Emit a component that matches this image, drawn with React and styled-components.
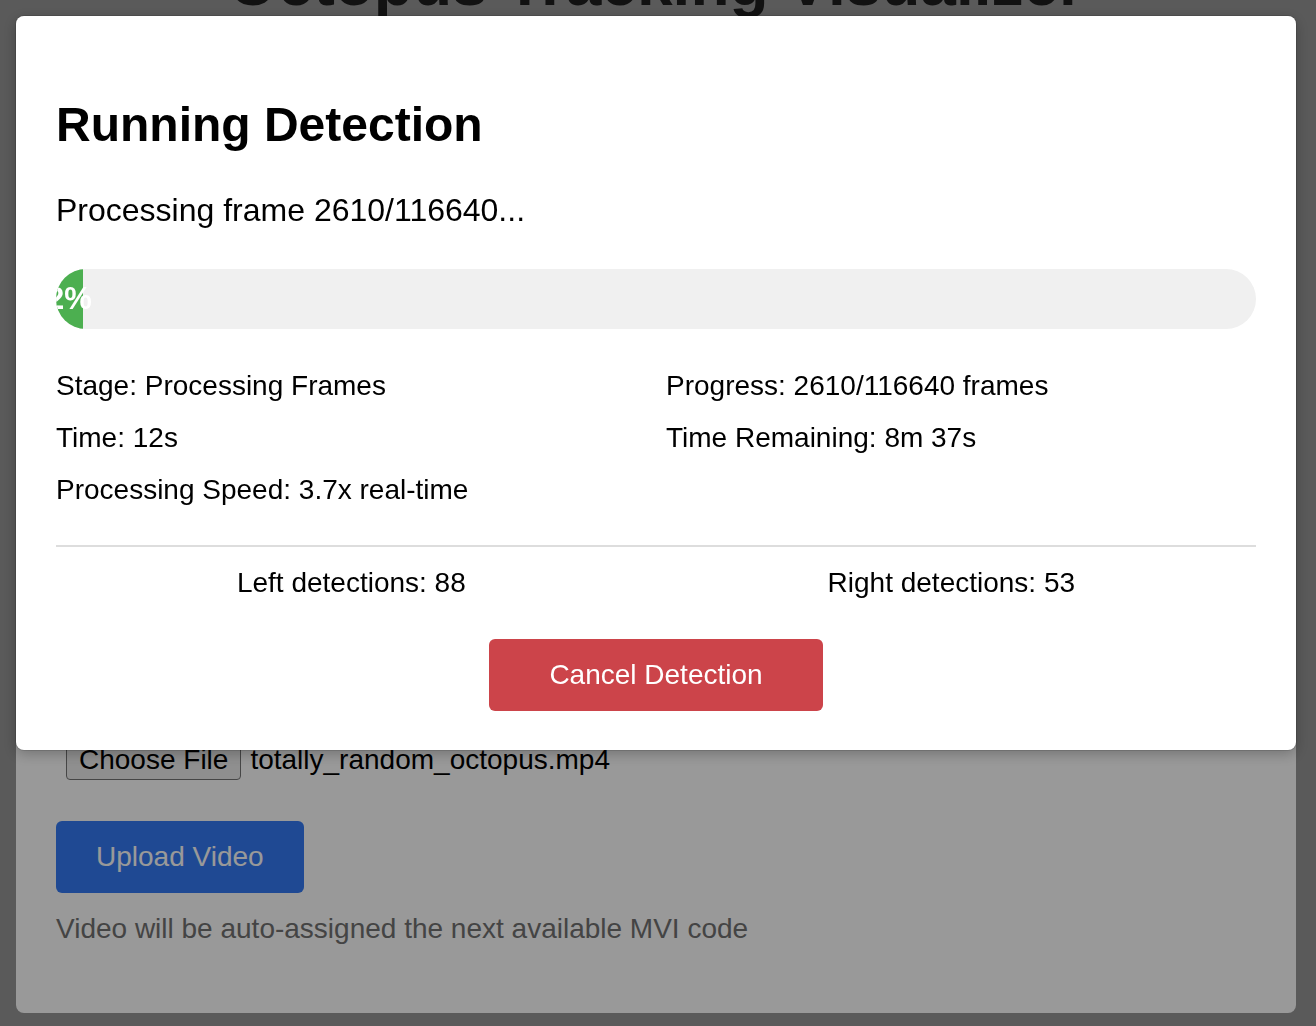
import styled, { createGlobalStyle } from 'styled-components';

const GlobalStyle = createGlobalStyle`
    html, body {
        margin: 0;
        padding: 0;
        background: rgb(150, 150, 150);
        font-family: "Liberation Sans", Arial, Helvetica, sans-serif;
        overflow: hidden;
    }
    * {
        box-sizing: border-box;
    }
`

const job = {
    frame: 2610,
    total: 116640,
    stage: 'Processing Frames',
    time: '12s',
    remaining: '8m 37s',
    speed: '3.7x',
    left: 88,
    right: 53,
};

function App() {
    const pct = (job.frame / job.total) * 100;

    return (
        <>
            <GlobalStyle />
            <Page>
                <PageTitle>Octopus Tracking Visualizer</PageTitle>
                <Card>
                    <SectionTitle>Available Videos</SectionTitle>
                    <VideoList />
                    <SectionTitle>Upload New Video</SectionTitle>
                    <FileRow>
                        <FileButton>Choose File</FileButton>
                        <FileName>totally_random_octopus.mp4</FileName>
                    </FileRow>
                    <Button $bg='#347bf5'>Upload Video</Button>
                    <Hint>Video will be auto-assigned the next available MVI code</Hint>
                </Card>
            </Page>

            <Overlay>
                <Modal>
                    <ModalTitle>Running Detection</ModalTitle>
                    <Status>Processing frame {job.frame}/{job.total}...</Status>
                    <Track>
                        <Fill style={{ width: `${pct}%` }}>
                            <span>{Math.round(pct)}%</span>
                        </Fill>
                    </Track>
                    <Stats>
                        <span>Stage: {job.stage}</span>
                        <span>Progress: {job.frame}/{job.total} frames</span>
                        <span>Time: {job.time}</span>
                        <span>Time Remaining: {job.remaining}</span>
                        <span>Processing Speed: {job.speed} real-time</span>
                    </Stats>
                    <Detections>
                        <span>Left detections: {job.left}</span>
                        <span>Right detections: {job.right}</span>
                    </Detections>
                    <Actions>
                        <Button $bg='#cc444a' $px='60px'>Cancel Detection</Button>
                    </Actions>
                </Modal>
            </Overlay>
        </>
    )
}

const Page = styled.div`
    padding: 0 20px 0 16px;
`
const PageTitle = styled.h1`
    margin: -49px 0 1px;
    font-size: 64px;
    line-height: 1;
    font-weight: 700;
    text-align: center;
    color: #1e1e1e;
`
const Card = styled.section`
    display: flex;
    flex-direction: column;
    align-items: flex-start;
    background: #fff;
    border-radius: 8px;
    padding: 40px 40px 68px;
`
const SectionTitle = styled.h2`
    margin: 0 0 24px;
    font-size: 40px;
    line-height: 48px;
    color: #222;
`
const VideoList = styled.div`
    width: 100%;
    height: 516px;
    margin-bottom: 24px;
    border: 1px solid #ddd;
    border-radius: 6px;
`
const FileRow = styled.div`
    display: flex;
    align-items: center;
    gap: 9px;
    padding-left: 10px;
    margin-bottom: 41px;
    font-size: 28px;
    line-height: 32px;
`
const FileButton = styled.span`
    padding: 3px 12px;
    border: 1px solid #767676;
    border-radius: 4px;
    background: #efefef;
    color: #000;
`
const FileName = styled.span`
    color: #000;
`
const Button = styled.button`
    border: none;
    border-radius: 6px;
    padding: 20px ${({ $px }) => $px || '40px'};
    background: ${({ $bg }) => $bg};
    color: #fff;
    font-family: inherit;
    font-size: 28px;
    line-height: 32px;
    cursor: pointer;
`
const Hint = styled.p`
    margin: 20px 0 0;
    font-size: 28px;
    line-height: 32px;
    color: #727272;
`
const Overlay = styled.div`
    position: fixed;
    inset: 0;
    display: flex;
    align-items: flex-start;
    padding: 16px 20px 16px 16px;
    background: rgba(0, 0, 0, 0.4);
`
const Modal = styled.div`
    width: 100%;
    background: #fff;
    border-radius: 8px;
    padding: 41px 40px 39px;
    box-shadow: 0 0 0 1px rgba(0, 0, 0, 0.12), 0 4px 14px rgba(0, 0, 0, 0.25);
    color: #000;
`
const ModalTitle = styled.h2`
    margin: 40px 0;
    font-size: 48px;
    line-height: 55px;
    font-weight: 700;
`
const Status = styled.p`
    margin: 0 0 40px;
    font-size: 32px;
    line-height: 37px;
`
const Track = styled.div`
    height: 60px;
    border-radius: 30px;
    background: #f0f0f0;
    overflow: hidden;
    margin-bottom: 41px;
`
const Fill = styled.div`
    height: 100%;
    background: #4caf50;
    display: flex;
    align-items: center;
    justify-content: center;
    overflow: visible;

    span {
        color: #fff;
        font-size: 31px;
        font-weight: 700;
        white-space: nowrap;
    }
`
const Stats = styled.div`
    display: grid;
    grid-template-columns: 1fr 1fr;
    column-gap: 20px;
    row-gap: 20px;
    font-size: 28px;
    line-height: 32px;
    padding-bottom: 39px;
    border-bottom: 2px solid #ddd;
`
const Detections = styled.div`
    display: flex;
    justify-content: space-around;
    padding-top: 20px;
    font-size: 28px;
    line-height: 32px;
`
const Actions = styled.div`
    display: flex;
    justify-content: center;
    margin-top: 40px;
`

export default App;
